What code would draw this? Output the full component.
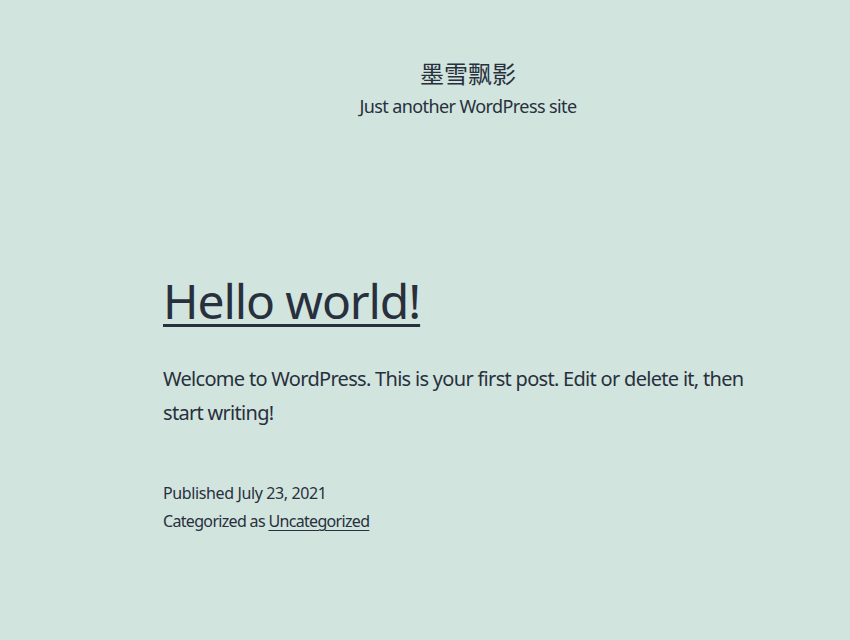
import React from 'react';

const font = { fontFamily: '"Noto Sans", "Noto Sans CJK SC", sans-serif' };

export default function App() {
  return (
    <div className="min-h-[640px] w-full bg-[#d1e4dd] text-[#28303d]" style={font}>
      <div className="ml-[163px] w-[610px]">
        {/* site header */}
        <header className="pt-[58px] text-center">
          <p className="text-[24px] leading-[31px]">墨雪飘影</p>
          <p className="mt-[5px] text-[18px] leading-[25px] tracking-[-0.033em]">
            Just another WordPress site
          </p>
        </header>

        {/* post */}
        <article className="mt-[151px]">
          <h1 className="text-[48px] leading-[62px] tracking-[-0.023em]">
            <a href="#" className="underline decoration-[3px] underline-offset-[5px]">
              Hello world!
            </a>
          </h1>
          <div className="mt-[30px] text-[20px] leading-[34px] tracking-[-0.035em]">
            <p>Welcome to WordPress. This is your first post. Edit or delete it, then start writing!</p>
          </div>
          <footer className="mt-[49px] text-[16px] leading-[28px]">
            <p className="tracking-[-0.024em]">Published July 23, 2021</p>
            <p className="tracking-[-0.042em]">
              Categorized as{' '}
              <a href="#" className="underline decoration-1 underline-offset-[3px]">
                Uncategorized
              </a>
            </p>
          </footer>
        </article>
      </div>
    </div>
  );
}
